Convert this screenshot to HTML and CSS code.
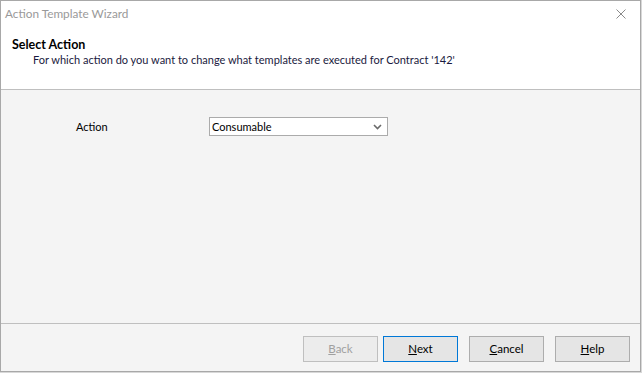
FILE: index.html
```html
<!DOCTYPE html>
<html lang="en">
<head>
  <meta charset="UTF-8" />
  <title>Action Template Wizard</title>
  <link rel="stylesheet" href="styles.css">
</head>
<body>

<div class="window">
  <div class="titlebar">
    <span class="title">Action Template Wizard</span>
    <svg class="close" width="10" height="10" viewBox="0 0 10 10">
      <path d="M0.5 0.5 L9.5 9.5 M9.5 0.5 L0.5 9.5" stroke="#8a8a8a" stroke-width="1" fill="none"/>
    </svg>
  </div>

  <div class="header">
    <h3>Select Action</h3>
    <p>For which action do you want to change what templates are executed for Contract '142'</p>
  </div>

  <div class="content">
    <div class="field">
      <label>Action</label>
      <div class="combo">
        <span>Consumable</span>
        <svg width="9" height="6" viewBox="0 0 9 6">
          <path d="M1 1 L4.5 4.5 L8 1" stroke="#6a6a6a" stroke-width="1.6" fill="none"/>
        </svg>
      </div>
    </div>
  </div>

  <div class="buttons">
    <button class="btn" disabled><u>B</u>ack</button>
    <button class="btn default"><u>N</u>ext</button>
    <button class="btn"><u>C</u>ancel</button>
    <button class="btn"><u>H</u>elp</button>
  </div>
</div>

</body>
</html>
```

FILE: styles.css
```css
body {
  margin: 0;
  background: #d8d8d8;
  font-family: Lato, "Liberation Sans", sans-serif;
  font-size: 11px;
  color: #000;
}
.window {
  width: 639px;
  height: 370px;
  border: 1px solid #a8a8a8;
  background: #f4f4f4;
  display: flex;
  flex-direction: column;
}
.titlebar {
  background: #fff;
  height: 25px;
  display: flex;
  align-items: center;
  justify-content: space-between;
  padding: 0 14px 3px 4px;
}
.title {
  color: #999;
  font-size: 11.8px;
}
.header {
  background: #fff;
  height: 60px;
  border-bottom: 1px solid #bfbfbf;
}
.header h3 {
  margin: 8px 0 0 11px;
  font-size: 12.5px;
  font-weight: bold;
}
.header p {
  margin: 1px 0 0 32px;
  color: #1a1a40;
}
.content {
  flex: 1;
  border-bottom: 1px solid #bfbfbf;
}
.field {
  display: flex;
  align-items: center;
  margin: 27px 0 0 75px;
}
.field label {
  width: 133px;
}
.combo {
  width: 170px;
  height: 17px;
  background: #fff;
  border: 1px solid #ababab;
  display: flex;
  align-items: center;
  justify-content: space-between;
  padding: 0 5px 0 2px;
}
.buttons {
  height: 45px;
  display: flex;
  align-items: center;
  gap: 11px;
  padding: 2px 0 0 302px;
}
.btn {
  width: 75px;
  height: 26px;
  font-family: inherit;
  font-size: 11.5px;
  background: #e5e5e5;
  border: 1px solid #adadad;
  color: #000;
  padding: 0;
}
.btn[disabled] {
  background: #ececec;
  border-color: #bfbfbf;
  color: #a0a0a0;
  margin-right: -6px;
}
.btn.default {
  border-color: #0078d7;
}
```
